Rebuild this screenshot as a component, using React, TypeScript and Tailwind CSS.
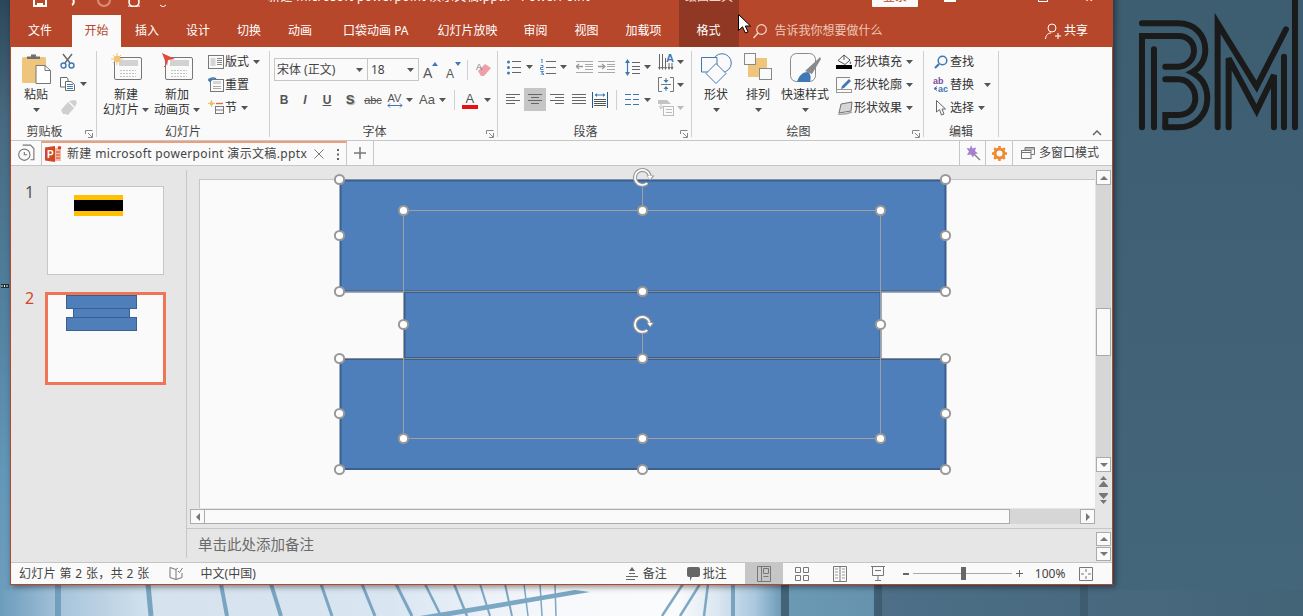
import React from "react";

const G = "#777";
const B = "#3f78b5";

function Caret({ c = "#555", className = "" }: { c?: string; className?: string }) {
  return (
    <svg width="7" height="4" viewBox="0 0 7 4" className={"shrink-0 " + className}>
      <path d="M0 0h7L3.5 4z" fill={c} />
    </svg>
  );
}

function Launcher() {
  return (
    <svg width="8" height="8" viewBox="0 0 8 8" className="absolute right-[3px] bottom-[-1px]">
      <path d="M0.5 4V0.5H7.5M3 3l4 4M7.5 3V7.5H3" fill="none" stroke="#888" strokeWidth="1" />
    </svg>
  );
}

function Group({ w, label, launcher, children }: { w: string; label: string; launcher?: boolean; children: React.ReactNode }) {
  return (
    <div className={"relative flex flex-col h-[86px] mt-[4px] border-r border-[#d0d0d0] shrink-0 " + w}>
      <div className="flex-1 flex min-h-0">{children}</div>
      <div className={"h-[15px] leading-[15px] text-center text-[12px] text-[#444] -mb-[2px] " + (launcher ? "pr-[18px]" : "")}>{label}</div>
      {launcher && <Launcher />}
    </div>
  );
}

function Big({ w, icon, l1, l2, ml = "" }: { w: string; icon: React.ReactNode; l1: string; l2?: string; ml?: string }) {
  return (
    <div className={"flex flex-col items-center shrink-0 " + w + " " + ml}>
      <div className="h-[34px] mt-[2px] flex items-start justify-center">{icon}</div>
      <div className="h-[15px] leading-[15px] text-[12px] text-[#333] whitespace-nowrap">{l1}</div>
      <div className="h-[15px] leading-[15px] text-[12px] text-[#333] whitespace-nowrap flex items-center gap-[3px]">
        {l2}
        <Caret />
      </div>
    </div>
  );
}

function Row({ icon, text, iw = "w-[19px]", caretGap = "ml-[4px]", caret = true }: { icon: React.ReactNode; text: string; iw?: string; caretGap?: string; caret?: boolean }) {
  return (
    <div className="h-[23px] flex items-center text-[12px] text-[#333] whitespace-nowrap">
      <div className={"flex justify-center shrink-0 " + iw}>{icon}</div>
      {text}
      {caret && <Caret className={caretGap} />}
    </div>
  );
}

const Lines = ({ ys, x1 = 0, x2 = 14, c = G, sw = 1 }: { ys: number[]; x1?: number; x2?: number; c?: string; sw?: number }) => (
  <>
    {ys.map((y) => (
      <path key={y} d={`M${x1} ${y + 0.5}H${x2}`} stroke={c} strokeWidth={sw} />
    ))}
  </>
);

function PasteIcon() {
  return (
    <svg width="29" height="31" viewBox="0 0 29 31">
      <rect x="0" y="4" width="24" height="26" rx="1.5" fill="#eec57b" />
      <path d="M5 6V3.5H9V1.5H14V3.5H18V6z" fill="#6f6f6f" />
      <path d="M14 12.5H23L28.5 17.5V30.5H14z" fill="#fff" stroke="#777" />
      <path d="M23 12.5V17.5H28.5" fill="none" stroke="#777" />
    </svg>
  );
}
function ScissorsIcon() {
  return (
    <svg width="15" height="16" viewBox="0 0 15 16" fill="none">
      <path d="M3 1l7 9M12 1L5 10" stroke="#666" strokeWidth="1.4" />
      <circle cx="3.5" cy="12.5" r="2.5" stroke={B} strokeWidth="1.4" />
      <circle cx="11.5" cy="12.5" r="2.5" stroke={B} strokeWidth="1.4" />
    </svg>
  );
}
function CopyIcon() {
  return (
    <svg width="15" height="14" viewBox="0 0 15 14" fill="none">
      <path d="M.5.5H7L8 2V10H.5z" fill="#fff" stroke="#6a6a6a" />
      <path d="M5.5 4.5H11L14.5 7.5V13.5H5.5z" fill="#fff" stroke="#6a6a6a" />
      <Lines ys={[7, 9, 11]} x1={7} x2={13} c={B} />
    </svg>
  );
}
function PainterIcon() {
  return (
    <svg width="17" height="15" viewBox="0 0 17 15">
      <path d="M9 1l6-1 2 2-2 5zM1 10l7-8 6 6-6 7-3-1-2 0z" fill="#cfcfcf" />
    </svg>
  );
}
function SlideBase({ children }: { children: React.ReactNode }) {
  return (
    <svg width="31" height="29" viewBox="0 0 31 29" fill="none">
      <rect x="3.5" y="4.5" width="27" height="22" rx="1.5" fill="#fafafa" stroke="#777" />
      <rect x="8" y="7" width="19" height="6" fill="#d2d2d2" />
      <path d="M9 17.5H25M9 20.5H25M9 23.5H25" stroke="#c2c2c2" strokeDasharray="2 1" />
      {children}
    </svg>
  );
}
function NewSlideIcon() {
  return (
    <SlideBase>
      <circle cx="6" cy="6" r="3.2" fill="#f3c476" />
      <path d="M6 0v12M0 6h12M2 2l8 8M10 2l-8 8" stroke="#f3c476" strokeWidth="1" />
    </SlideBase>
  );
}
function PlaneIcon() {
  return (
    <SlideBase>
      <path d="M0 0L13 6 6 7 5 13z" fill="#e24b3a" />
      <path d="M4 12L2 14" stroke="#e24b3a" />
    </SlideBase>
  );
}
function LayoutIcon() {
  return (
    <svg width="16" height="14" viewBox="0 0 16 14" fill="none">
      <rect x=".5" y=".5" width="15" height="13" stroke="#777" />
      <rect x="2.5" y="3" width="5" height="8" fill="#d5d5d5" />
      <Lines ys={[3, 5, 7, 9]} x1={9} x2={14} c="#888" />
    </svg>
  );
}
function ResetIcon() {
  return (
    <svg width="16" height="15" viewBox="0 0 16 15" fill="none">
      <rect x="2.5" y="2.5" width="13" height="12" stroke="#777" />
      <rect x="5" y="4" width="8" height="3" fill="#d5d5d5" />
      <Lines ys={[9, 11]} x1={5} x2={13} c="#aaa" />
      <path d="M1 4a4 3 0 017-2" stroke={B} strokeWidth="1.6" />
      <path d="M0 1.5l1.5 4 3-2.5z" fill={B} />
    </svg>
  );
}
function SectionIcon() {
  return (
    <svg width="16" height="15" viewBox="0 0 16 15" fill="none">
      <circle cx="3.5" cy="3.5" r="2" fill="#f0c070" />
      <path d="M3.5 0v7M0 3.5h7" stroke="#f0c070" />
      <path d="M8 3.5h7" stroke="#d86a4a" strokeWidth="1.4" />
      <rect x="7.5" y="6.5" width="8" height="7" stroke="#777" />
      <path d="M7.5 10h8" stroke="#777" />
    </svg>
  );
}
function GrowA({ up }: { up: boolean }) {
  return (
    <div className="relative w-[16px] h-[18px] text-[#555]">
      <span className={"absolute left-[1px] bottom-[-1px] leading-none font-['Liberation_Sans',sans-serif] " + (up ? "text-[14px]" : "text-[12px]")}>A</span>
      <svg width="6" height="4" viewBox="0 0 6 4" className="absolute right-[0px] top-[1px]">
        <path d={up ? "M0 4h6L3 0z" : "M0 0h6L3 4z"} fill={B} />
      </svg>
    </div>
  );
}
function EraserIcon() {
  return (
    <svg width="16" height="16" viewBox="0 0 16 16">
      <path d="M2 9l7-7 6 4-7 8-3 0z" fill="#ee9fa8" />
      <text x="0" y="8" fontSize="9" fill="#777" fontFamily="Liberation Sans">A</text>
    </svg>
  );
}
function BulletIcon() {
  return (
    <svg width="14" height="15" viewBox="0 0 14 15" fill="none">
      <circle cx="1.5" cy="2" r="1.5" fill={B} />
      <circle cx="1.5" cy="7.5" r="1.5" fill={B} />
      <circle cx="1.5" cy="13" r="1.5" fill={B} />
      <Lines ys={[1, 7, 12]} x1={5} x2={14} c="#666" />
    </svg>
  );
}
function NumIcon() {
  return (
    <svg width="16" height="16" viewBox="0 0 16 16" fill="none">
      <path d="M1 .5L2 0V4M.5 6.5h2.5V8.5H.5V10.500h3M.5 12.5h3L1.500 14l2 .5V16H.5" stroke={B} strokeWidth=".9" />
      <Lines ys={[2, 8, 14]} x1={6} x2={16} c="#666" />
    </svg>
  );
}
function IndentIcon({ inc }: { inc?: boolean }) {
  return (
    <svg width="17" height="14" viewBox="0 0 17 14" fill="none">
      <Lines ys={[1, 12]} x1={0} x2={17} c="#a9a9a9" />
      <Lines ys={[4, 6, 9]} x1={9} x2={17} c="#a9a9a9" />
      <path d={inc ? "M0 6.500H6M4 4l3 2.500L4 9" : "M7 6.500H1M3 4L0 6.500 3 9"} stroke="#9a9a9a" strokeWidth="1.300" />
    </svg>
  );
}
function LineSpacingIcon() {
  return (
    <svg width="15" height="17" viewBox="0 0 15 17" fill="none">
      <path d="M2.500 2V15" stroke={B} strokeWidth="1.200" />
      <path d="M0 4l2.500-4L5 4zM0 13l2.500 4L5 13z" fill={B} />
      <Lines ys={[3, 7, 10, 14]} x1={7} x2={15} c="#666" />
    </svg>
  );
}
function TextDirIcon() {
  return (
    <svg width="16" height="17" viewBox="0 0 16 17" fill="none">
      <text x="8" y="9" fontSize="11" fontWeight="700" fill={B} fontFamily="Liberation Sans">A</text>
      <path d="M1.500 1v13M4.500 1v13M7.500 5v9M11 10v4M14 10v4" stroke="#666" />
      <path d="M0 14l1.500 3L3 14zM3 14l1.500 3L6 14zM6 14l1.500 3L9 14zM9.500 14l1.500 3 1.500-3zM12.500 14l1.500 3 1.500-3z" fill="#666" />
    </svg>
  );
}
function AlignIcon({ kind }: { kind: "l" | "c" | "r" | "j" }) {
  const rows: [number, number][] =
    kind === "l" ? [[0, 14], [0, 9], [0, 14], [0, 9]] : kind === "c" ? [[0, 14], [3, 11], [0, 14], [3, 11]] : kind === "r" ? [[0, 14], [5, 14], [0, 14], [5, 14]] : [[0, 14], [0, 14], [0, 14], [0, 14]];
  return (
    <svg width="14" height="11" viewBox="0 0 14 11" fill="none">
      {rows.map(([a, b], i) => (
        <path key={i} d={`M${a} ${i * 3 + 0.5}H${b}`} stroke="#666" />
      ))}
    </svg>
  );
}
function DistIcon() {
  return (
    <svg width="16" height="16" viewBox="0 0 16 16" fill="none">
      <path d="M.5 0v16M15.500 0v16" stroke="#1e5a96" />
      <path d="M3 3h10" stroke={B} />
      <path d="M3 3l2-2v4zM13 3l-2-2v4z" fill={B} />
      <Lines ys={[7, 9, 11, 13]} x1={2} x2={14} c="#555" />
    </svg>
  );
}
function ColumnsIcon() {
  return (
    <svg width="14" height="11" viewBox="0 0 14 11">
      <Lines ys={[0, 5, 10]} x1={0} x2={6} c={B} />
      <Lines ys={[0, 5, 10]} x1={8} x2={14} c={B} />
    </svg>
  );
}
function AlignTextIcon() {
  return (
    <svg width="16" height="15" viewBox="0 0 16 15" fill="none">
      <path d="M4 .5H.5V14.500H4M12 .5h3.500V14.500H12" stroke="#777" />
      <path d="M8 1v4M8 14v-4" stroke={B} />
      <path d="M5.500 3h5L8 6zM5.500 12h5L8 9z" fill={B} />
      <Lines ys={[7]} x1={3} x2={13} c="#777" />
    </svg>
  );
}
function SmartArtIcon() {
  return (
    <svg width="16" height="16" viewBox="0 0 16 16" fill="none">
      <path d="M0 0H9L13 4H0z" fill="#c4c4c4" />
      <path d="M3 4V8M1 6L3 9 5 6" stroke="#c4c4c4" />
      <rect x="5.500" y="6.500" width="10" height="9" fill="#fafafa" stroke="#bbb" />
      <Lines ys={[9, 12]} x1={8} x2={14} c="#bbb" />
    </svg>
  );
}
function ShapesIcon() {
  return (
    <svg width="31" height="31" viewBox="0 0 31 31" fill="none">
      <circle cx="21" cy="10" r="9.300" stroke={B} />
      <path d="M.5 4.500H16V19H.5z" stroke={B} fill="#fafafa" />
      <path d="M15 10.500L25 20.500 15 30.500 5 20.500z" stroke={B} fill="#fafafa" />
    </svg>
  );
}
function ArrangeIcon() {
  return (
    <svg width="28" height="27" viewBox="0 0 28 27" fill="none">
      <rect x="4" y="5" width="19" height="19" fill="#eec57b" />
      <rect x=".5" y=".5" width="11" height="11" fill="#fafafa" stroke="#888" />
      <rect x="15.500" y="15.500" width="12" height="11" fill="#fafafa" stroke="#888" />
    </svg>
  );
}
function QuickStyleIcon() {
  return (
    <svg width="31" height="30" viewBox="0 0 31 30" fill="none">
      <rect x=".5" y=".5" width="25" height="28" rx="6" stroke="#8a8a8a" fill="#fafafa" />
      <path d="M15 18L27 7 30 4 31 6 22 21z" fill="#8a8a8a" />
      <path d="M7 29C9 22 13 19 18 19 21 21 21 25 20 29z" fill={B} />
    </svg>
  );
}
function FillIcon() {
  return (
    <svg width="17" height="15" viewBox="0 0 17 15" fill="none">
      <path d="M2 6.500L8 1l6 5-5 4.500z" fill="#fafafa" stroke="#555" />
      <path d="M8 1V6" stroke="#555" />
      <path d="M14 7q2 2 1 3-2 0-1-3z" fill="#3f78b5" />
      <rect x="0" y="11" width="16" height="4" fill="#000" />
    </svg>
  );
}
function OutlineIcon() {
  return (
    <svg width="17" height="16" viewBox="0 0 17 16" fill="none">
      <path d="M14 .5H.5V12" stroke="#888" />
      <path d="M6 9L13 2l2 2-7 7-3 1z" fill={B} />
      <rect x=".5" y="12.500" width="15" height="3" stroke="#999" fill="#fafafa" />
    </svg>
  );
}
function EffectIcon() {
  return (
    <svg width="16" height="14" viewBox="0 0 16 14" fill="none">
      <path d="M2 12L4 3 15 1l-1 9z" fill="#d6d6d6" stroke="#555" strokeWidth=".8" />
      <path d="M1 13q6 1 14-2" stroke="#aaa" strokeWidth="1.500" />
    </svg>
  );
}
function FindIcon() {
  return (
    <svg width="14" height="14" viewBox="0 0 14 14" fill="none">
      <circle cx="8.500" cy="5.500" r="4.300" stroke={B} strokeWidth="1.500" />
      <path d="M5 9l-4 4" stroke={B} strokeWidth="2.200" />
    </svg>
  );
}
function ReplaceIcon() {
  return (
    <svg width="16" height="15" viewBox="0 0 16 15">
      <text x="0" y="7" fontSize="9" fontWeight="700" fill="#7a4ea0" fontFamily="Liberation Sans">ab</text>
      <text x="5" y="15" fontSize="9" fontWeight="700" fill={B} fontFamily="Liberation Sans">ac</text>
      <path d="M4 9.500L1 11.500l3 2M1 11.500H4" stroke={B} fill="none" />
    </svg>
  );
}
function SelectIcon() {
  return (
    <svg width="10" height="16" viewBox="0 0 10 16" fill="none">
      <path d="M.5.5V12L3.500 9.500 5.500 15 8 14 6 9H9.500z" stroke="#666" fill="#fafafa" />
    </svg>
  );
}
function PptIcon() {
  return (
    <svg width="17" height="16" viewBox="0 0 17 16">
      <path d="M6 2H16V15H6z" fill="#f3b9a5" />
      <path d="M0 1.500L10 0V16L0 14.500z" fill="#d24726" />
      <text x="2" y="12" fontSize="10" fontWeight="700" fill="#fff" fontFamily="Liberation Sans">P</text>
      <circle cx="14.500" cy="1.800" r="1.800" fill="#e0402a" />
      <path d="M11 6h4M11 9h4M11 12h4" stroke="#d24726" />
    </svg>
  );
}

type H = [number, number];
const handles: H[] = [
  [339, 179], [945, 179], [339, 235], [945, 235], [339, 291], [642, 291], [945, 291],
  [403, 210], [642, 210], [880, 210], [403, 324], [880, 324], [403, 438], [642, 438], [880, 438],
  [642, 358], [339, 358], [945, 358], [339, 413], [945, 413], [339, 469], [642, 469], [945, 469],
];

function Rotate({ x, y }: { x: number; y: number }) {
  const d = `M${x + 7.2} ${y - 1.9}A7.500 7.500 0 1 0 ${x + 4.8} ${y + 5.700}`;
  return (
    <g fill="none">
      <path d={d} stroke="#999" strokeWidth="4" />
      <path d={`M${x + 4} ${y - 2}h8l-4 5z`} fill="#999" />
      <path d={d} stroke="#fff" strokeWidth="1.700" />
      <path d={`M${x + 5} ${y - 1.500}h5l-2.500 3.500z`} fill="#fff" />
    </g>
  );
}

function CanvasArt() {
  return (
    <svg className="absolute left-0 top-0" width="909" height="342" viewBox="187 166 909 342">
      <rect x="340.500" y="180.500" width="605" height="111" fill="#4f7fba" stroke="#3a6090" strokeWidth="2" />
      <rect x="404.500" y="292" width="476" height="66" fill="#4f7fba" stroke="#3a6090" strokeWidth="2" />
      <rect x="340.500" y="359" width="605" height="110" fill="#4f7fba" stroke="#3a6090" strokeWidth="2" />
      <path d="M339 291.500H945M339 358.500H945" stroke="#8a8a8a" />
      <rect x="403.500" y="210.500" width="477" height="228" fill="none" stroke="#a0a0a0" />
      <path d="M642.500 186V210M642.500 332V358" stroke="#a0a0a0" />
      {handles.map(([x, y]) => (
        <circle key={x + "-" + y} cx={x + 0.5} cy={y + 0.5} r="4.600" fill="#fff" stroke="#999" strokeWidth="2" />
      ))}
      <Rotate x={642.5} y={177.5} />
      <Rotate x={642.5} y={324.5} />
    </svg>
  );
}

function ScrollBtn({ dir, w = "w-[15px]", h = "h-[15px]" }: { dir: "u" | "d" | "l" | "r"; w?: string; h?: string }) {
  const p = { u: "M1 5h8L5 1z", d: "M1 1h8L5 5z", l: "M6 1v8L2 5z", r: "M2 1v8L6 5z" }[dir];
  const box = dir === "u" || dir === "d" ? "0 0 10 6" : "0 0 8 10";
  const sz = dir === "u" || dir === "d" ? { width: 10, height: 6 } : { width: 8, height: 10 };
  return (
    <div className={"flex items-center justify-center bg-[#fafafa] border border-[#ababab] shrink-0 " + w + " " + h}>
      <svg {...sz} viewBox={box}>
        <path d={p} fill="#777" />
      </svg>
    </div>
  );
}

function VScroll() {
  return (
    <div className="w-[17px] shrink-0 flex flex-col pt-[4px]">
      <div className="w-[15px] ml-[1px] h-[302px] bg-[#d6d6d6] flex flex-col shrink-0">
        <ScrollBtn dir="u" />
        <div className="h-[123px] shrink-0" />
        <div className="h-[48px] shrink-0 bg-[#fafafa] border border-[#ababab]" />
        <div className="flex-1" />
        <ScrollBtn dir="d" />
      </div>
      <div className="flex flex-col items-center w-[17px] pt-[4px] gap-[6px]">
        <svg width="9" height="11" viewBox="0 0 9 11"><path d="M4.500 0L8 4H1zM4.500 5L9 10H0z M0 10h9v1H0z" fill="#777" /></svg>
        <svg width="9" height="11" viewBox="0 0 9 11"><path d="M0 0h9v1H0zM0 1h9L4.500 6zM1 7h7l-3.500 4z" fill="#777" /></svg>
      </div>
    </div>
  );
}

function Wallpaper() {
  const stripes: [number, number, number][] = [
    [58, 58, 6], [148, 151, 5], [221, 227, 4], [271, 281, 4], [321, 332, 3], [362, 375, 3], [396, 412, 3], [425, 441, 2.500],
    [454, 467, 2.500], [480, 490, 2], [505, 512, 2], [524, 528, 1.500], [540, 542, 1.500], [555, 556, 1.500], [683, 662, 2.500], [700, 680, 2.500], [708, 704, 2.500], [733, 733, 4], [785, 785, 8], [878, 878, 8], [1084, 1084, 8],
  ];
  return (
    <svg className="absolute inset-0" width="1303" height="616" viewBox="0 0 1303 616">
      <defs>
        <linearGradient id="wall" x1="0" x2="1" y1="0" y2="0">
          <stop offset="0" stopColor="#6c9cbb" />
          <stop offset=".05" stopColor="#a9c6dc" />
          <stop offset=".12" stopColor="#d6e3ef" />
          <stop offset=".3" stopColor="#d9e6f2" />
          <stop offset=".42" stopColor="#f6f8fb" />
          <stop offset=".52" stopColor="#fafbfc" />
          <stop offset=".55" stopColor="#dce7f1" />
          <stop offset=".58" stopColor="#a9c7de" />
          <stop offset=".6" stopColor="#6c9ab5" />
          <stop offset=".67" stopColor="#6592ad" />
          <stop offset=".675" stopColor="#4d6f87" />
          <stop offset="1" stopColor="#436477" />
        </linearGradient>
        <linearGradient id="leftw" x1="0" x2="0" y1="0" y2="1">
          <stop offset="0" stopColor="#2c4759" />
          <stop offset=".2" stopColor="#47697f" />
          <stop offset=".45" stopColor="#4e7b98" />
          <stop offset=".8" stopColor="#6396b8" />
          <stop offset="1" stopColor="#6c9dbf" />
        </linearGradient>
        <linearGradient id="rightw" x1="0" x2="0" y1="0" y2="1">
          <stop offset="0" stopColor="#3d5d71" />
          <stop offset="1" stopColor="#44667b" />
        </linearGradient>
      </defs>
      <rect x="0" y="584" width="1303" height="32" fill="url(#wall)" />
      <rect x="0" y="0" width="10" height="590" fill="url(#leftw)" />
      <rect x="1113" y="0" width="190" height="590" fill="url(#rightw)" />
      {stripes.map(([a, b, w]) => (
        <path key={a} d={`M${a} 584L${b} 616`} stroke={a > 780 ? "#3d5a6e" : "#6a9aba"} strokeWidth={w} opacity=".85" />
      ))}
      <path d="M420 616L450 616 590 592 575 590z" fill="#7ba7c4" />
      <rect x="1" y="284" width="8" height="4" fill="#1d2c38" />
      <path d="M2 285v2M4.500 285v2M7 285v2" stroke="#f2f2e0" />
      <g fill="none" stroke="#1a1a1a" strokeWidth="18" transform="translate(900 0) scale(0.3333)" strokeLinecap="round">
        <path d="M726 70H835C885 70 916 105 916 150 916 180 900 205 876 217 905 232 922 260 922 295 922 345 885 382 835 382H796" />
        <path d="M726 382V108H835C865 108 882 128 882 152 882 178 860 200 835 200H796" />
        <path d="M762 382V148" />
        <path d="M796 382V345H835C865 345 886 325 886 295 886 262 862 238 835 238H796" />
        <path d="M953 382V70L1070 260 1158 88" />
        <path d="M986 382V175L1070 332 1122 225V382" />
        <path d="M1152 382V170" />
        <path d="M1185 382V0" />
      </g>
    </svg>
  );
}

const tabs: [string, string][] = [
  ["插入", "ml-[14px]"], ["设计", "ml-[27px]"], ["切换", "ml-[27px]"], ["动画", "ml-[27px]"],
  ["口袋动画 PA", "ml-[31px]"], ["幻灯片放映", "ml-[29px]"], ["审阅", "ml-[26px]"], ["视图", "ml-[27px]"], ["加载项", "ml-[27px]"],
];

export default function App() {
  return (
    <div className="relative w-[1303px] h-[616px] overflow-hidden font-['Noto_Sans','Noto_Sans_CJK_SC',sans-serif] bg-[#406074]">
      <Wallpaper />
      <div className="absolute left-[10px] top-[-16px] w-[1103px] h-[601px] flex flex-col border border-[#b7472a] bg-[#e6e6e6] shadow-[2px_2px_6px_rgba(0,0,0,0.45)]">
        {/* title bar */}
        <div className="h-[30px] bg-[#b7472a] relative shrink-0 text-white overflow-hidden">
          <svg className="absolute left-[22px] top-[8px]" width="140" height="14" viewBox="0 0 140 14" fill="none">
            <path d="M1 1h12v12H1z" stroke="#fff" strokeWidth="2" />
            <path d="M4 10h6v4H4z" fill="#fff" />
            <path d="M38 2q5 8 1 10" stroke="#fff" strokeWidth="2" />
            <circle cx="71" cy="7" r="6" stroke="#d98e79" strokeWidth="2" />
            <circle cx="101" cy="9" r="5" stroke="#fff" strokeWidth="1.500" />
            <path d="M95 13h12" stroke="#fff" />
            <path d="M127 12l3 2 3-2" stroke="#fff" />
          </svg>
          <div className="absolute left-[257px] top-[3px] text-[12px] leading-[18px] whitespace-nowrap tracking-[0.4px]">新建 microsoft powerpoint 演示文稿.pptx  -  PowerPoint</div>
          <div className="absolute left-[668px] top-[0px] w-[60px] h-[30px] bg-[#903823] text-center text-[12px] leading-[30px] text-[#f3d6cb]">
            <span className="relative top-[-3px]">绘图工具</span>
          </div>
          <div className="absolute left-[861px] top-[5px] w-[46px] h-[17px] bg-[#fafafa] rounded-[1px] text-[#b7472a] text-[12px] leading-[14px] text-center">登录</div>
          <div className="absolute left-[933px] top-[15px] w-[12px] h-[2px] bg-white" />
          <div className="absolute left-[1027px] top-[12px] w-[10px] h-[5px] border border-white" />
          <div className="absolute left-[1074px] top-[8px] w-[10px] h-[10px] text-[10px] leading-[10px]">✕</div>
        </div>
        {/* ribbon tabs */}
        <div className="h-[32px] bg-[#b7472a] flex items-stretch shrink-0 text-white text-[12px] relative">
          <div className="ml-[17px] flex items-center">文件</div>
          <div className="ml-[20px] w-[49px] bg-[#fafafa] text-[#b7472a] flex items-center justify-center">开始</div>
          {tabs.map(([t, c]) => (
            <div key={t} className={"flex items-center whitespace-nowrap " + c}>{t}</div>
          ))}
          <div className="ml-[17px] w-[60px] bg-[#903823] flex items-center justify-center">格式</div>
          <div className="ml-[14px] flex items-center">
            <svg width="14" height="15" viewBox="0 0 14 15" fill="none">
              <circle cx="8.500" cy="5.500" r="4.800" stroke="#f3d6cb" strokeWidth="1.200" />
              <path d="M5 9l-4.500 5" stroke="#f3d6cb" strokeWidth="1.400" />
            </svg>
          </div>
          <div className="ml-[8px] flex items-center text-[#eec9bb]">告诉我你想要做什么</div>
          <div className="ml-auto mr-[24px] flex items-center gap-[3px]">
            <svg width="16" height="16" viewBox="0 0 16 16" fill="none">
              <circle cx="7" cy="5" r="4" stroke="#fff" />
              <path d="M.5 16C1 12 3 10 6 10M10 13h6M13 10v6" stroke="#fff" />
            </svg>
            共享
          </div>
        </div>
        {/* ribbon */}
        <div className="relative h-[94px] bg-[#fafafa] flex shrink-0 border-b border-[#c6c6c6]">
          <Group w="w-[86px]" label="剪贴板" launcher>
            <Big w="w-[36px]" ml="ml-[7px]" icon={<PasteIcon />} l1="粘贴" />
            <div className="ml-[6px] flex flex-col items-start pt-[2px]">
              <ScissorsIcon />
              <div className="flex items-center gap-[5px] mt-[8px]"><CopyIcon /><Caret /></div>
              <div className="mt-[9px]"><PainterIcon /></div>
            </div>
          </Group>
          <Group w="w-[173px]" label="幻灯片">
            <Big w="w-[48px]" ml="ml-[5px]" icon={<NewSlideIcon />} l1="新建" l2="幻灯片" />
            <Big w="w-[48px]" ml="ml-[3px]" icon={<PlaneIcon />} l1="新加" l2="动画页" />
            <div className="ml-[5px] flex flex-col -mt-[1px]">
              <Row icon={<LayoutIcon />} text="版式" />
              <Row icon={<ResetIcon />} text="重置" caret={false} />
              <Row icon={<SectionIcon />} text="节" />
            </div>
          </Group>
          <Group w="w-[228px]" label="字体" launcher>
            <div className="flex flex-col pl-[4px] pt-[7px]">
              <div className="flex items-center h-[23px]">
                <div className="w-[145px] h-[23px] flex border border-[#c6c6c6] bg-[#fafafa] text-[12px] text-[#444]">
                  <div className="w-[93px] pl-[2px] flex items-center justify-between pr-[4px] border-r border-[#c6c6c6] whitespace-nowrap">宋体 (正文)<Caret /></div>
                  <div className="flex-1 pl-[3px] flex items-center justify-between pr-[4px]">18<Caret /></div>
                </div>
                <div className="ml-[3px]"><GrowA up /></div>
                <div className="ml-[7px]"><GrowA up={false} /></div>
                <div className="ml-[6px] w-[1px] h-[20px] bg-[#d0d0d0]" />
                <div className="ml-[8px]"><EraserIcon /></div>
              </div>
              <div className="flex items-center h-[22px] mt-[8px] text-[#555] font-['Liberation_Sans',sans-serif]">
                <div className="w-[20px] text-center text-[12px] font-bold">B</div>
                <div className="w-[22px] text-center text-[12px] italic font-bold">I</div>
                <div className="w-[22px] text-center text-[12px] font-bold underline">U</div>
                <div className="w-[24px] text-center text-[13px] font-bold [text-shadow:1px_1px_1px_#aaa]">S</div>
                <div className="w-[22px] text-center text-[11px] line-through">abc</div>
                <div className="w-[21px] flex flex-col items-center text-[11px] leading-[10px] text-[#555]">
                  AV
                  <svg width="16" height="5" viewBox="0 0 16 5" fill="none"><path d="M1 2.500H15M3 .5L1 2.500 3 4.500M13 .5l2 2-2 2" stroke={B} /></svg>
                </div>
                <Caret className="ml-[1px]" />
                <div className="ml-[6px] text-[13px]">Aa</div>
                <Caret className="ml-[4px]" />
                <div className="ml-[8px] w-[1px] h-[20px] bg-[#d0d0d0]" />
                <div className="ml-[7px] w-[16px] flex flex-col items-center text-[13px] leading-[13px]">
                  A
                  <div className="w-[16px] h-[4px] bg-[#e81010]" />
                </div>
                <Caret className="ml-[6px]" />
              </div>
            </div>
          </Group>
          <Group w="w-[194px]" label="段落" launcher>
            <div className="flex flex-col w-[154px] pl-[9px] pt-[8px]">
              <div className="flex items-center h-[16px]">
                <BulletIcon /><Caret className="ml-[5px]" />
                <div className="ml-[7px]"><NumIcon /></div><Caret className="ml-[4px]" />
                <div className="ml-[9px]"><IndentIcon /></div>
                <div className="ml-[5px]"><IndentIcon inc /></div>
                <div className="ml-[10px]"><LineSpacingIcon /></div><Caret className="ml-[4px]" />
              </div>
              <div className="flex items-center h-[23px] mt-[13px] -ml-[1px]">
                <AlignIcon kind="l" />
                <div className="ml-[4px] w-[22px] h-[23px] bg-[#c6c6c6] flex items-center justify-center"><AlignIcon kind="c" /></div>
                <div className="ml-[4px]"><AlignIcon kind="r" /></div>
                <div className="ml-[8px]"><AlignIcon kind="j" /></div>
                <div className="ml-[6px]"><DistIcon /></div>
                <div className="ml-[8px] w-[1px] h-[20px] bg-[#d0d0d0]" />
                <div className="ml-[8px]"><ColumnsIcon /></div><Caret className="ml-[5px]" />
              </div>
            </div>
            <div className="flex flex-col -mt-[1px] ml-[6px]">
              <div className="h-[23px] flex items-center gap-[3px]"><TextDirIcon /><Caret /></div>
              <div className="h-[23px] flex items-center gap-[3px]"><AlignTextIcon /><Caret /></div>
              <div className="h-[23px] flex items-center gap-[3px]"><SmartArtIcon /><Caret c="#bbb" /></div>
            </div>
          </Group>
          <Group w="w-[232px]" label="绘图" launcher>
            <Big w="w-[36px]" ml="ml-[6px]" icon={<ShapesIcon />} l1="形状" />
            <Big w="w-[36px]" ml="ml-[6px]" icon={<ArrangeIcon />} l1="排列" />
            <Big w="w-[52px]" ml="ml-[3px]" icon={<QuickStyleIcon />} l1="快速样式" />
            <div className="ml-[4px] flex flex-col -mt-[1px]">
              <Row iw="w-[19px]" icon={<FillIcon />} text="形状填充" />
              <Row iw="w-[19px]" icon={<OutlineIcon />} text="形状轮廓" />
              <Row iw="w-[19px]" icon={<EffectIcon />} text="形状效果" />
            </div>
          </Group>
          <Group w="w-[75px]" label="编辑">
            <div className="ml-[7px] flex flex-col -mt-[1px]">
              <Row iw="w-[19px]" icon={<FindIcon />} text="查找" caret={false} />
              <Row iw="w-[19px]" icon={<ReplaceIcon />} text="替换" caretGap="ml-[10px]" />
              <Row iw="w-[19px]" icon={<SelectIcon />} text="选择" />
            </div>
          </Group>
          <svg className="absolute right-[10px] bottom-[4px]" width="10" height="6" viewBox="0 0 10 6" fill="none">
            <path d="M1 5l4-4 4 4" stroke="#666" strokeWidth="1.500" />
          </svg>
        </div>
        {/* doc tabs */}
        <div className="h-[25px] bg-[#fafafa] flex items-stretch shrink-0 border-b border-[#c6c6c6] text-[12px] text-[#444]">
          <div className="w-[30px] flex items-center justify-center">
            <svg width="18" height="18" viewBox="0 0 16 16" fill="none">
              <path d="M5 1H12L15 4V14H12" stroke="#777" />
              <circle cx="6.500" cy="9.500" r="5" fill="#fafafa" stroke="#777" />
              <path d="M6.500 7V9.500H9" stroke="#777" />
            </svg>
          </div>
          <div className="w-[306px] border-t-2 border-t-[#ee9e7c] border-r border-r-[#c6c6c6] border-l border-l-[#c6c6c6] flex items-center pl-[3px] bg-[#fafafa]">
            <PptIcon />
            <span className="ml-[5px] whitespace-nowrap tracking-[0.35px]">新建 microsoft powerpoint 演示文稿.pptx</span>
            <svg className="ml-[7px]" width="10" height="10" viewBox="0 0 10 10"><path d="M.5.5l9 9M9.500.5l-9 9" stroke="#777" /></svg>
            <svg className="ml-[13px]" width="3" height="11" viewBox="0 0 3 11"><path d="M0 0h2v2H0zM0 4.500h2v2H0zM0 9h2v2H0z" fill="#666" /></svg>
          </div>
          <div className="w-[27px] border-r border-[#c6c6c6] flex items-center justify-center">
            <svg width="12" height="12" viewBox="0 0 12 12"><path d="M6 0v12M0 6h12" stroke="#777" strokeWidth="1.500" /></svg>
          </div>
          <div className="ml-auto flex items-stretch">
            <div className="w-[27px] border-x border-[#c6c6c6] flex items-center justify-center">
              <svg width="16" height="16" viewBox="0 0 16 16">
                <path d="M6 0l1.500 3.500L11 2.500 10 6l3 2.500-3.500.5L8 12.500 6 9.500 2 10l2-3.500L1.500 3l3.500.5z" fill="#a77fd0" />
                <path d="M9 9l6 6" stroke="#888" strokeWidth="1.500" />
              </svg>
            </div>
            <div className="w-[27px] border-r border-[#c6c6c6] flex items-center justify-center">
              <svg width="15" height="15" viewBox="0 0 15 15" fill="none">
                <circle cx="7.500" cy="7.500" r="4.500" stroke="#f08a30" strokeWidth="3" />
                <path d="M7.500 0v2.500M7.500 12.500V15M0 7.500h2.500M12.500 7.500H15M2.200 2.200l2 2M10.800 10.800l2 2M12.800 2.200l-2 2M4.200 10.800l-2 2" stroke="#f08a30" strokeWidth="2.500" />
              </svg>
            </div>
            <div className="w-[99px] flex items-center pl-[8px] gap-[4px] whitespace-nowrap">
              <svg width="14" height="12" viewBox="0 0 14 12" fill="none">
                <path d="M4 3V.5H13.500V7.500H10" stroke="#777" />
                <rect x=".5" y="3.500" width="9.500" height="8" fill="#fafafa" stroke="#777" />
                <path d="M.5 5.500H10M4 2h9" stroke="#777" />
              </svg>
              多窗口模式
            </div>
          </div>
        </div>
        {/* main */}
        <div className="flex-1 flex min-h-0">
          <div className="w-[176px] shrink-0 border-r border-[#c6c6c6] my-[4px] flex flex-col pl-[14px]">
            <div className="flex mt-[16px]">
              <div className="w-[22px] text-[16px] leading-[20px] text-[#555] -mt-[4px]">1</div>
              <div className="w-[117px] h-[89px] bg-[#fafafa] border border-[#c6c6c6] pl-[26px] pt-[8px]">
                <div className="w-[49px] h-[21px] bg-[#000] border-y-[5px] border-[#ffc000]" />
              </div>
            </div>
            <div className="flex mt-[17px]">
              <div className="w-[20px] text-[16px] leading-[20px] text-[#d24726] -mt-[4px]">2</div>
              <div className="w-[121px] h-[93px] bg-[#fafafa] border-[3px] border-[#f07555] pl-[18px] pt-[0px] flex flex-col">
                <div className="w-[71px] h-[14px] bg-[#4f7fba] border border-[#3a6090]" />
                <div className="w-[57px] h-[8px] ml-[7px] bg-[#4f7fba] border-x border-[#3a6090]" />
                <div className="w-[71px] h-[14px] bg-[#4f7fba] border border-[#3a6090]" />
              </div>
            </div>
          </div>
          <div className="flex-1 flex flex-col min-w-0">
            <div className="flex-1 flex min-h-0">
              <div className="relative flex-1 min-w-0 overflow-hidden">
                <div className="ml-[12px] mt-[13px] h-[329px] bg-[#fafafa] border-l border-t border-[#c6c6c6]" />
                <CanvasArt />
              </div>
              <VScroll />
            </div>
            <div className="h-[20px] shrink-0 flex flex-col">
              <div className="h-[15px] mt-[1px] ml-[3px] mr-[17px] flex bg-[#d6d6d6]">
                <ScrollBtn dir="l" />
                <div className="w-[805px] bg-[#fafafa] border-y border-r border-[#ababab]" />
                <div className="flex-1" />
                <ScrollBtn dir="r" />
              </div>
            </div>
            <div className="h-[34px] shrink-0 border-t border-[#c6c6c6] flex">
              <div className="flex-1 pl-[11px] flex items-center text-[14.5px] text-[#6b6b6b] pb-[1px]">单击此处添加备注</div>
              <div className="w-[17px] flex flex-col items-center pt-[3px] gap-[1px]">
                <ScrollBtn dir="u" h="h-[14px]" />
                <ScrollBtn dir="d" h="h-[14px]" />
              </div>
            </div>
          </div>
        </div>
        {/* status bar */}
        <div className="h-[22px] bg-[#fafafa] border-t border-[#c6c6c6] shrink-0 flex items-stretch text-[12px] text-[#444] whitespace-nowrap">
          <div className="ml-[8px] flex items-center tracking-[0.35px]">幻灯片 第 2 张，共 2 张</div>
          <div className="ml-[19px] flex items-center">
            <svg width="14" height="13" viewBox="0 0 14 13" fill="none">
              <path d="M7 2.500L1 .5V10.500L7 12.500V2.500L9 1M7 12.500L13 10.500V6" stroke="#777" />
              <path d="M9 4l1.500 1.500L13.500 1" stroke="#777" />
            </svg>
          </div>
          <div className="ml-[18px] flex items-center">中文(中国)</div>
          <div className="ml-[370px] flex items-center gap-[5px]">
            <svg width="12" height="14" viewBox="0 0 12 14" fill="none">
              <path d="M6 0l3 4H3z" fill="#666" />
              <path d="M3 6.500H9M0 9.500H12M0 12.500H9" stroke="#666" />
            </svg>
            备注
          </div>
          <div className="ml-[20px] flex items-center gap-[3px]">
            <svg width="13" height="14" viewBox="0 0 13 14"><path d="M2 0H11Q13 0 13 2V8Q13 10 11 10H5L3 14V10H2Q0 10 0 8V2Q0 0 2 0z" fill="#666" /></svg>
            批注
          </div>
          <div className="ml-[18px] w-[38px] bg-[#c6c6c6] flex items-center justify-center">
            <svg width="14" height="16" viewBox="0 0 14 16" fill="none"><path d="M.5.5H13.500V15.500H.5zM4.500.5V15.500M6.500 2.500H11.500V7.500H6.500zM6.500 10.500H11.500" stroke="#777" /></svg>
          </div>
          <div className="w-[38px] flex items-center justify-center">
            <svg width="14" height="14" viewBox="0 0 14 14" fill="none"><path d="M.5.5H5.500V5.500H.5zM8.500.5H13.500V5.500H8.500zM.5 8.500H5.500V13.500H.5zM8.500 8.500H13.500V13.500H8.500z" stroke="#777" /></svg>
          </div>
          <div className="w-[38px] flex items-center justify-center">
            <svg width="14" height="16" viewBox="0 0 14 16" fill="none"><path d="M.5.5H13.500V15.500H.5zM7 .5V15.500" stroke="#777" /><path d="M2 3H5M2 6H5M2 9H5M2 12H5M9 3H12M9 6H12M9 9H12M9 12H12" stroke="#999" /></svg>
          </div>
          <div className="w-[38px] flex items-center justify-center">
            <svg width="14" height="15" viewBox="0 0 14 15" fill="none"><path d="M0 .5H14M1.500.5V9.500H12.500V.5M4 4.500H10M7 9.500V14M4 14.500H10" stroke="#777" /></svg>
          </div>
          <div className="ml-[6px] flex items-center">
            <div className="w-[6px] h-[2px] bg-[#666]" />
            <div className="relative ml-[4px] w-[99px] h-[1px] bg-[#aaa]">
              <div className="absolute left-[48px] top-[-6px] w-[5px] h-[13px] bg-[#666]" />
            </div>
            <svg className="ml-[4px]" width="7" height="7" viewBox="0 0 7 7"><path d="M3.500 0v7M0 3.500h7" stroke="#666" /></svg>
            <span className="ml-[12px]">100%</span>
            <svg className="ml-[14px]" width="14" height="14" viewBox="0 0 14 14" fill="none">
              <path d="M.5.5H13.500V13.500H.5z" stroke="#777" />
              <path d="M7 2v3M7 9v3M2 7h3M9 7h3" stroke="#777" />
            </svg>
          </div>
        </div>
      </div>
      <svg className="absolute left-[738px] top-[14px]" width="13" height="20" viewBox="0 0 13 20">
        <path d="M.5.5V16.500L4.500 12.800 7.300 19 10 17.800 7.300 12H12.500z" fill="#fff" stroke="#000" />
      </svg>
    </div>
  );
}
